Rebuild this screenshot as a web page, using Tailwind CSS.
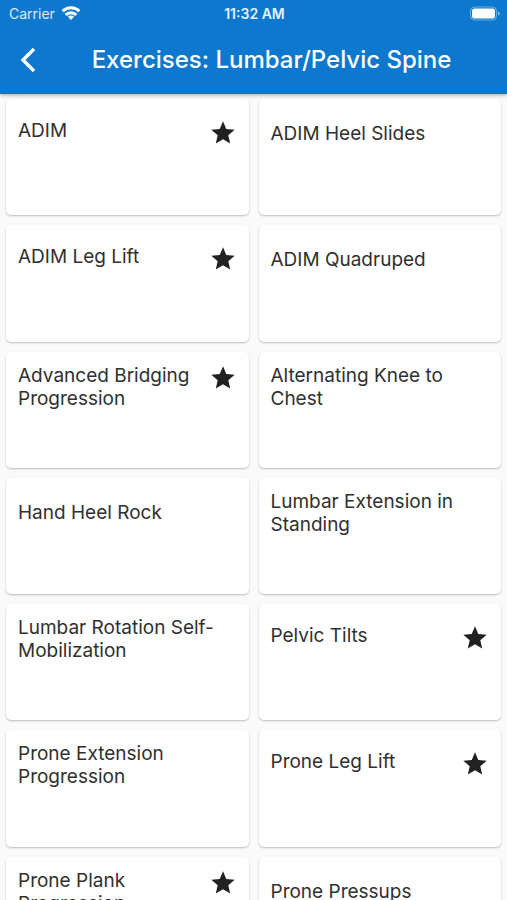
<!DOCTYPE html>
<html lang="en">
<head>
    <meta charset="UTF-8">
    <meta name="viewport" content="width=device-width, initial-scale=1.0">
    <title>Exercises: Lumbar/Pelvic Spine</title>
    <script src="https://cdn.jsdelivr.net/npm/@tailwindcss/browser@4"></script>
</head>
<body class="bg-[#fafafa] font-[Inter,Roboto,sans-serif] text-[#303030] h-screen flex flex-col overflow-hidden">

    <!-- Star icon shared by the favourite cards -->
    <svg class="hidden">
        <symbol id="star" viewBox="0 0 24 24">
            <path d="M12 17.27L18.18 21l-1.64-7.03L22 9.24l-7.19-.61L12 2 9.19 8.63 2 9.24l5.46 4.73L5.82 21z"/>
        </symbol>
    </svg>

    <header class="relative z-10 bg-[#0d78cd] text-white shadow-[0_1px_4px_rgba(0,0,0,0.35)]">
        <!-- Status bar -->
        <div class="grid grid-cols-3 items-center h-7 pl-[9px] pr-[7px] text-sm">
            <div class="flex items-center gap-[6px] text-white/85">
                <span>Carrier</span>
                <svg class="w-5 h-4" viewBox="0 0 20 16" fill="none" stroke="#fff" stroke-width="3">
                    <path d="M1.6 5.2C6.3 0.700 13.7 0.700 18.4 5.200"/>
                    <path d="M4.7 8.800C7.7 5.900 12.3 5.900 15.3 8.800"/>
                    <path d="M10 14L6.9 10.800C8.7 9.200 11.3 9.200 13.1 10.800z" fill="#fff" stroke="none"/>
                </svg>
            </div>
            <span class="text-center font-semibold text-white/90">11:32 AM</span>
            <svg class="w-[30px] h-4 justify-self-end" viewBox="0 0 30 16">
                <rect x="0.5" y="1" width="26" height="13" rx="4" fill="none" stroke="#fff" stroke-opacity=".4"/>
                <rect x="2" y="2.500" width="23" height="10" rx="2.5" fill="#fff"/>
                <path d="M28 5.500v4c1.4-.5 1.8-1.2 1.8-2S29.4 6 28 5.500z" fill="#fff" fill-opacity=".5"/>
            </svg>
        </div>

        <!-- App bar -->
        <div class="flex items-center h-[66px] pb-[3px] pl-2 pr-3">
            <button type="button" aria-label="Back" class="w-10 h-10 flex items-center justify-center">
                <svg class="w-6 h-8" viewBox="0 0 24 32" fill="none" stroke="#fff" stroke-width="3.4">
                    <path d="M18 5L7 16L18 27"/>
                </svg>
            </button>
            <h1 class="flex-1 text-center text-2xl font-medium whitespace-nowrap">Exercises: Lumbar/Pelvic Spine</h1>
        </div>
    </header>

    <main class="flex-1 min-h-0 overflow-y-auto [scrollbar-width:none] px-px">
        <ul class="grid grid-cols-2 text-[19px] leading-[23px]">
            <li class="aspect-[2/1] p-[5px]">
                <a href="#" class="flex items-start h-full px-3 pt-5 bg-white rounded-[5px] shadow-[0_1px_2px_rgba(0,0,0,0.25)]">
                    <span class="flex-1">ADIM</span>
                    <svg class="w-7 h-7 shrink-0 fill-[#212121]"><use href="#star"/></svg>
                </a>
            </li>
            <li class="aspect-[2/1] p-[5px]">
                <a href="#" class="flex items-start h-full px-3 pt-[23px] bg-white rounded-[5px] shadow-[0_1px_2px_rgba(0,0,0,0.25)]">
                    <span class="flex-1">ADIM Heel Slides</span>
                </a>
            </li>
            <li class="aspect-[2/1] p-[5px]">
                <a href="#" class="flex items-start h-full px-3 pt-5 bg-white rounded-[5px] shadow-[0_1px_2px_rgba(0,0,0,0.25)]">
                    <span class="flex-1">ADIM Leg Lift</span>
                    <svg class="w-7 h-7 shrink-0 fill-[#212121]"><use href="#star"/></svg>
                </a>
            </li>
            <li class="aspect-[2/1] p-[5px]">
                <a href="#" class="flex items-start h-full px-3 pt-[23px] bg-white rounded-[5px] shadow-[0_1px_2px_rgba(0,0,0,0.25)]">
                    <span class="flex-1">ADIM Quadruped</span>
                </a>
            </li>
            <li class="aspect-[2/1] p-[5px]">
                <a href="#" class="flex items-start h-full px-3 pt-3 bg-white rounded-[5px] shadow-[0_1px_2px_rgba(0,0,0,0.25)]">
                    <span class="flex-1">Advanced Bridging Progression</span>
                    <svg class="w-7 h-7 shrink-0 fill-[#212121]"><use href="#star"/></svg>
                </a>
            </li>
            <li class="aspect-[2/1] p-[5px]">
                <a href="#" class="flex items-start h-full px-3 pt-3 bg-white rounded-[5px] shadow-[0_1px_2px_rgba(0,0,0,0.25)]">
                    <span class="flex-1">Alternating Knee to Chest</span>
                </a>
            </li>
            <li class="aspect-[2/1] p-[5px]">
                <a href="#" class="flex items-start h-full px-3 pt-[23px] bg-white rounded-[5px] shadow-[0_1px_2px_rgba(0,0,0,0.25)]">
                    <span class="flex-1">Hand Heel Rock</span>
                </a>
            </li>
            <li class="aspect-[2/1] p-[5px]">
                <a href="#" class="flex items-start h-full px-3 pt-3 bg-white rounded-[5px] shadow-[0_1px_2px_rgba(0,0,0,0.25)]">
                    <span class="flex-1">Lumbar Extension in Standing</span>
                </a>
            </li>
            <li class="aspect-[2/1] p-[5px]">
                <a href="#" class="flex items-start h-full px-3 pt-3 bg-white rounded-[5px] shadow-[0_1px_2px_rgba(0,0,0,0.25)]">
                    <span class="flex-1">Lumbar Rotation Self-Mobilization</span>
                </a>
            </li>
            <li class="aspect-[2/1] p-[5px]">
                <a href="#" class="flex items-start h-full px-3 pt-5 bg-white rounded-[5px] shadow-[0_1px_2px_rgba(0,0,0,0.25)]">
                    <span class="flex-1">Pelvic Tilts</span>
                    <svg class="w-7 h-7 shrink-0 fill-[#212121]"><use href="#star"/></svg>
                </a>
            </li>
            <li class="aspect-[2/1] p-[5px]">
                <a href="#" class="flex items-start h-full px-3 pt-3 bg-white rounded-[5px] shadow-[0_1px_2px_rgba(0,0,0,0.25)]">
                    <span class="flex-1">Prone Extension Progression</span>
                </a>
            </li>
            <li class="aspect-[2/1] p-[5px]">
                <a href="#" class="flex items-start h-full px-3 pt-5 bg-white rounded-[5px] shadow-[0_1px_2px_rgba(0,0,0,0.25)]">
                    <span class="flex-1">Prone Leg Lift</span>
                    <svg class="w-7 h-7 shrink-0 fill-[#212121]"><use href="#star"/></svg>
                </a>
            </li>
            <li class="aspect-[2/1] p-[5px]">
                <a href="#" class="flex items-start h-full px-3 pt-3 bg-white rounded-[5px] shadow-[0_1px_2px_rgba(0,0,0,0.25)]">
                    <span class="flex-1">Prone Plank Progression</span>
                    <svg class="w-7 h-7 shrink-0 fill-[#212121]"><use href="#star"/></svg>
                </a>
            </li>
            <li class="aspect-[2/1] p-[5px]">
                <a href="#" class="flex items-start h-full px-3 pt-[23px] bg-white rounded-[5px] shadow-[0_1px_2px_rgba(0,0,0,0.25)]">
                    <span class="flex-1">Prone Pressups</span>
                </a>
            </li>
        </ul>
    </main>

</body>
</html>
